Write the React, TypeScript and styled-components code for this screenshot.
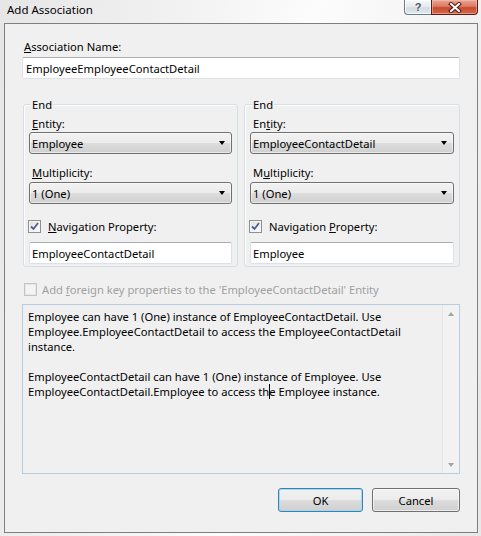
import React from 'react';
import styled, { createGlobalStyle } from 'styled-components';

const GlobalStyle = createGlobalStyle`
  html, body {
    margin: 0;
    padding: 0;
  }
  body {
    font-family: "Noto Sans", "Open Sans", sans-serif;
    font-size: 11.2px;
    color: #000;
  }
`;

const Window = styled.div`
  width: 481px;
  height: 536px;
  box-sizing: border-box;
  padding: 0 3px 3px 4px;
  display: flex;
  flex-direction: column;
  background: linear-gradient(
    100deg,
    #e6e6e6 0%,
    #f1f1f1 30%,
    #fcfcfc 55%,
    #f3f3f3 80%,
    #e8e8e8 100%
  );
`;

const TitleBar = styled.div`
  height: 23px;
  display: flex;
  justify-content: space-between;
  align-items: flex-start;
`;

const Caption = styled.div`
  margin-left: 3px;
  line-height: 20px;
  font-size: 11.5px;
  color: #000;
`;

const CaptionButtons = styled.div`
  display: flex;
`;

const HelpButton = styled.div`
  width: 27px;
  height: 15px;
  box-sizing: border-box;
  border: 1px solid #6d7a88;
  border-top: none;
  border-right: none;
  border-radius: 0 0 0 4px;
  background: linear-gradient(#f7f9fb 0%, #e4e9ee 50%, #d3dae2 55%, #e3e8ee 100%);
  box-shadow: inset 0 0 0 1px rgba(255, 255, 255, 0.7);
  display: flex;
  align-items: center;
  justify-content: center;
  font-family: "Liberation Sans", sans-serif;
  font-weight: bold;
  font-size: 11px;
  color: #4b5563;
  text-shadow: 0 0 2px #fff;
`;

const CloseButton = styled.div`
  width: 47px;
  height: 15px;
  box-sizing: border-box;
  border: 1px solid #5a1e14;
  border-top: none;
  border-radius: 0 0 4px 0;
  background: linear-gradient(#e9a594 0%, #dc7b64 45%, #c94a2e 55%, #d26a50 100%);
  box-shadow: inset 0 0 0 1px rgba(255, 200, 190, 0.5);
  display: flex;
  align-items: center;
  justify-content: center;
`;

const Frame = styled.div`
  flex: 1;
  box-sizing: border-box;
  border: 1px solid #7f7f7f;
  background: #f0f0f0;
  padding: 15px 17px 0 17px;
  display: flex;
  flex-direction: column;
`;

const Label = styled.div<{ $top?: number; $indent?: number }>`
  line-height: 15px;
  margin-top: ${(p) => p.$top ?? 0}px;
  padding-left: ${(p) => p.$indent ?? 2}px;
  white-space: nowrap;
`;

const TextBox = styled.div<{ $top?: number; $pad?: number }>`
  height: 22px;
  box-sizing: border-box;
  margin-top: ${(p) => p.$top ?? 0}px;
  padding-left: ${(p) => p.$pad ?? 3}px;
  background: #fff;
  border: 1px solid #dde1e6;
  border-top-color: #abadb3;
  border-radius: 2px;
  display: flex;
  align-items: center;
  white-space: nowrap;
`;

const Groups = styled.div`
  margin-top: 25px;
  margin-left: 1px;
  display: grid;
  grid-template-columns: 215px 216px;
  gap: 6px;
`;

const GroupBox = styled.div`
  border: 1px solid #d5dfe5;
  border-radius: 3px;
  padding: 0 5px 2px;
  display: flex;
  flex-direction: column;
  box-shadow: inset 1px 1px 0 #fff;
`;

const Legend = styled.div`
  align-self: flex-start;
  margin: -8px 0 0 2px;
  padding: 0 1px;
  line-height: 15px;
  background: #f0f0f0;
`;

const Combo = styled.div<{ $top?: number }>`
  height: 22px;
  box-sizing: border-box;
  margin-top: ${(p) => p.$top ?? 0}px;
  padding: 0 6px 0 2px;
  border: 1px solid #707070;
  border-radius: 3px;
  background: linear-gradient(#f2f2f2 0%, #ebebeb 50%, #dddddd 50%, #cfcfcf 100%);
  box-shadow: inset 0 0 0 1px rgba(255, 255, 255, 0.55);
  display: flex;
  align-items: center;
  justify-content: space-between;
  white-space: nowrap;
`;

const Arrow = styled.span`
  width: 0;
  height: 0;
  border-left: 3.5px solid transparent;
  border-right: 3.5px solid transparent;
  border-top: 4px solid #000;
`;

const CheckRow = styled.div<{ $top?: number; $disabled?: boolean }>`
  display: flex;
  align-items: center;
  gap: ${(p) => (p.$disabled ? 5 : 7)}px;
  margin-top: ${(p) => p.$top ?? 0}px;
  margin-left: ${(p) => (p.$disabled ? 2 : -1)}px;
  line-height: 15px;
  color: ${(p) => (p.$disabled ? '#a0a0a0' : '#000')};
  white-space: nowrap;
`;

const CheckBox = styled.span<{ $disabled?: boolean }>`
  width: 13px;
  height: 13px;
  box-sizing: border-box;
  border: 1px solid ${(p) => (p.$disabled ? '#c4c4c4' : '#8e8f8f')};
  background: ${(p) =>
    p.$disabled ? '#f4f4f4' : 'linear-gradient(135deg, #dcdcdc 0%, #f4f4f4 60%, #fbfbfb 100%)'};
  box-shadow: inset 0 0 0 1px ${(p) => (p.$disabled ? '#e6e6e6' : '#f4f4f4')};
  display: flex;
  align-items: center;
  justify-content: center;
  flex: none;
`;

const Description = styled.div`
  margin-top: 7px;
  height: 170px;
  box-sizing: border-box;
  border: 1px solid #b7cde2;
  background: #f0f0f0;
  display: flex;
`;

const DescText = styled.div`
  flex: 1;
  padding: 4px 0 0 5px;
  line-height: 15px;
  white-space: nowrap;
`;

const Paragraph = styled.p`
  margin: 0 0 15px;
`;

const Caret = styled.span`
  display: inline-block;
  width: 1px;
  height: 15px;
  margin-right: -1px;
  background: #000;
  vertical-align: top;
`;

const ScrollTrack = styled.div`
  width: 16px;
  border-left: 1px solid #e6e6e6;
  background: #f2f2f2;
  display: flex;
  flex-direction: column;
  justify-content: space-between;
  align-items: center;
  padding: 7px 0 6px;
`;

const ScrollArrow = styled.span<{ $down?: boolean }>`
  width: 0;
  height: 0;
  border-left: 3.5px solid transparent;
  border-right: 3.5px solid transparent;
  ${(p) =>
    p.$down ? 'border-top: 4px solid #a3a3a3;' : 'border-bottom: 4px solid #a3a3a3;'}
`;

const ButtonRow = styled.div`
  margin-top: 14px;
  display: flex;
  justify-content: flex-end;
  gap: 9px;
`;

const Button = styled.div<{ $width: number; $default?: boolean }>`
  width: ${(p) => p.$width}px;
  height: 24px;
  box-sizing: border-box;
  border: 1px solid ${(p) => (p.$default ? '#3c7fb1' : '#707070')};
  border-radius: 3px;
  background: linear-gradient(#f2f2f2 0%, #ebebeb 50%, #dddddd 50%, #cfcfcf 100%);
  box-shadow: inset 0 0 0 1px ${(p) => (p.$default ? '#9fdcf6' : 'rgba(255, 255, 255, 0.6)')};
  display: flex;
  align-items: center;
  justify-content: center;
`;

const CheckMark = () => (
  <svg width="9" height="9" viewBox="0 0 9 9">
    <path d="M1 4.5 L3.5 7 L8 1" fill="none" stroke="#4a5f8f" strokeWidth="1.8" />
  </svg>
);

const CloseGlyph = () => (
  <svg width="14" height="11" viewBox="0 0 14 11">
    <path d="M3 2 L11 9 M11 2 L3 9" stroke="#4a1a12" strokeWidth="4" strokeLinecap="square" />
    <path d="M3 2 L11 9 M11 2 L3 9" stroke="#fff" strokeWidth="2" strokeLinecap="square" />
  </svg>
);

type EndProps = {
  entity: string;
  nav: string;
  entityKey: [string, string, string];
  multKey: [string, string, string];
  navKey: [string, string, string];
};

const EndGroup: React.FC<EndProps> = ({ entity, nav, entityKey, multKey, navKey }) => (
  <GroupBox>
    <Legend>End</Legend>
    <Label $top={4} $indent={3}>
      {entityKey[0]}
      <u>{entityKey[1]}</u>
      {entityKey[2]}
    </Label>
    <Combo $top={1}>
      <span>{entity}</span>
      <Arrow />
    </Combo>
    <Label $top={11} $indent={3}>
      {multKey[0]}
      <u>{multKey[1]}</u>
      {multKey[2]}
    </Label>
    <Combo $top={2}>
      <span>1 (One)</span>
      <Arrow />
    </Combo>
    <CheckRow $top={15}>
      <CheckBox>
        <CheckMark />
      </CheckBox>
      <span>
        {navKey[0]}
        <u>{navKey[1]}</u>
        {navKey[2]}
      </span>
    </CheckRow>
    <TextBox $top={8} $pad={2}>
      {nav}
    </TextBox>
  </GroupBox>
);

export default function App() {
  return (
    <>
      <GlobalStyle />
      <Window>
        <TitleBar>
          <Caption>Add Association</Caption>
          <CaptionButtons>
            <HelpButton>?</HelpButton>
            <CloseButton>
              <CloseGlyph />
            </CloseButton>
          </CaptionButtons>
        </TitleBar>
        <Frame>
          <Label $indent={2}>
            <u>A</u>ssociation Name:
          </Label>
          <TextBox $top={3}>EmployeeEmployeeContactDetail</TextBox>
          <Groups>
            <EndGroup
              entity="Employee"
              nav="EmployeeContactDetail"
              entityKey={['', 'E', 'ntity:']}
              multKey={['', 'M', 'ultiplicity:']}
              navKey={['', 'N', 'avigation Property:']}
            />
            <EndGroup
              entity="EmployeeContactDetail"
              nav="Employee"
              entityKey={['En', 't', 'ity:']}
              multKey={['M', 'u', 'ltiplicity:']}
              navKey={['Navigation ', 'P', 'roperty:']}
            />
          </Groups>
          <CheckRow $top={15} $disabled>
            <CheckBox $disabled />
            <span>
              Add <u>f</u>oreign key properties to the 'EmployeeContactDetail' Entity
            </span>
          </CheckRow>
          <Description>
            <DescText>
              <Paragraph>
                Employee can have 1 (One) instance of EmployeeContactDetail. Use
                <br />
                Employee.EmployeeContactDetail to access the EmployeeContactDetail
                <br />
                instance.
              </Paragraph>
              <Paragraph>
                EmployeeContactDetail can have 1 (One) instance of Employee. Use
                <br />
                EmployeeContactDetail.Employee to access th
                <Caret />e Employee instance.
              </Paragraph>
            </DescText>
            <ScrollTrack>
              <ScrollArrow />
              <ScrollArrow $down />
            </ScrollTrack>
          </Description>
          <ButtonRow>
            <Button $width={85} $default>
              OK
            </Button>
            <Button $width={88}>Cancel</Button>
          </ButtonRow>
        </Frame>
      </Window>
    </>
  );
}
